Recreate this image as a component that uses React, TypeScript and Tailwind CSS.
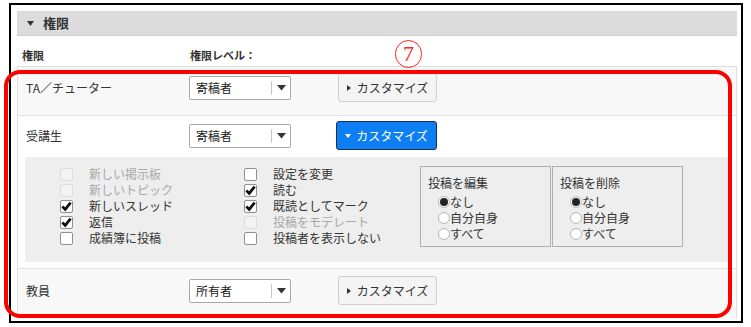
import React from "react";

const font = "font-['Noto_Sans_CJK_JP',sans-serif]";

type Item = { label: string; checked?: boolean; disabled?: boolean };

const col1: Item[] = [
  { label: "新しい掲示板", disabled: true },
  { label: "新しいトピック", disabled: true },
  { label: "新しいスレッド", checked: true },
  { label: "返信", checked: true },
  { label: "成績簿に投稿" },
];

const col2: Item[] = [
  { label: "設定を変更" },
  { label: "読む", checked: true },
  { label: "既読としてマーク", checked: true },
  { label: "投稿をモデレート", disabled: true },
  { label: "投稿者を表示しない" },
];

function Check({ item }: { item: Item }) {
  return (
    <div className="flex items-center h-[16px]">
      <span
        className={
          item.disabled
            ? "w-[13px] h-[13px] rounded-[2px] border border-[#dcdcdc] bg-[#f3f3f3] flex items-center justify-center"
            : "w-[13px] h-[13px] rounded-[2px] border border-[#8f8f8f] bg-white flex items-center justify-center"
        }
      >
        {item.checked && (
          <svg width="11" height="11" viewBox="0 0 11 11">
            <path d="M1.3 5.6 L4.2 8.4 L9.6 1.7" fill="none" stroke="#111" strokeWidth="2.8" />
          </svg>
        )}
      </span>
      <span className={item.disabled ? "ml-[16px] text-[#a8a8a8]" : "ml-[16px] text-[#333]"}>{item.label}</span>
    </div>
  );
}

function Radio({ label, on }: { label: string; on?: boolean }) {
  return (
    <div className="flex items-center h-[16px]">
      <span className="w-[12px] h-[12px] rounded-full border border-[#b5b5b5] bg-white flex items-center justify-center">
        {on && <span className="w-[8px] h-[8px] rounded-full bg-[#222]" />}
      </span>
      <span className="text-[#333]">{label}</span>
    </div>
  );
}

function Group({ title }: { title: string }) {
  return (
    <div className="w-[131px] h-[81px] border border-[#b0b0b0] pl-[7px] pt-[7px]">
      <div className="h-[18px] leading-[18px] text-[#333]">{title}</div>
      <div className="pl-[10px] pt-[2px]">
        <Radio label="なし" on />
        <Radio label="自分自身" />
        <Radio label="すべて" />
      </div>
    </div>
  );
}

function Select({ value }: { value: string }) {
  return (
    <div className="w-[102px] h-[24px] border border-[#a9a9a9] rounded-[2px] bg-white flex items-center">
      <span className="flex-1 pl-[6px] text-[#222] leading-[22px]">{value}</span>
      <span className="w-px h-[14px] bg-[#c8c8c8]" />
      <span className="w-[18px] flex justify-center">
        <svg width="9" height="6" viewBox="0 0 9 6">
          <path d="M0 0 H9 L4.5 5.5 Z" fill="#333" />
        </svg>
      </span>
    </div>
  );
}

function Custom({ active }: { active?: boolean }) {
  if (active) {
    return (
      <div className="w-[101px] h-[29px] rounded-[3px] border border-[#1c2f4d] bg-[#0d7ff3] flex items-center justify-center text-white">
        <svg width="6" height="4" viewBox="0 0 6 4" className="mr-[5px]">
          <path d="M0 0 H6 L3 4 Z" fill="#fff" />
        </svg>
        カスタマイズ
      </div>
    );
  }
  return (
    <div className="w-[99px] h-[29px] rounded-[3px] border border-[#d0d0d0] bg-[#f4f4f4] flex items-center justify-center text-[#333]">
      <svg width="4" height="6" viewBox="0 0 4 6" className="mr-[6px]">
        <path d="M0 0 L4 3 L0 6 Z" fill="#333" />
      </svg>
      カスタマイズ
    </div>
  );
}

function RowHead({ label, value, active }: { label: string; value: string; active?: boolean }) {
  return (
    <div className="flex items-center h-[29px]">
      <span className="w-[171px] pl-[8px] text-[#333]">{label}</span>
      <Select value={value} />
      <span className={active ? "ml-[45px]" : "ml-[47px]"}>
        <Custom active={active} />
      </span>
    </div>
  );
}

export default function App() {
  return (
    <div className={`relative w-[751px] h-[327px] bg-white text-[12px] ${font}`}>
      <div className="absolute left-[9px] top-[3px] w-[734px] h-[320px] border-2 border-black" />
      <div className="pl-[17px] pt-[11px] w-[737px]">
        <div className="h-[25px] bg-[#dcdcdc] border-b border-[#cfcfcf] flex items-center pl-[10px]">
          <svg width="7" height="5" viewBox="0 0 7 5">
            <path d="M0 0 H7 L3.5 5 Z" fill="#333" />
          </svg>
          <span className="ml-[9px] text-[13px] font-bold text-[#333] leading-[20px]">権限</span>
        </div>
        <div className="h-[31px] flex items-end pb-[3px] border-b border-[#dedede] text-[11px] font-bold text-[#333]">
          <span className="w-[173px] pl-[5px]">権限</span>
          <span>権限レベル：</span>
        </div>
        <div className="border-x border-[#dedede] h-[252px]">
          <div className="h-[49px] bg-[#f8f8f8] pt-[6px] border-b border-[#e2e2e2]">
            <RowHead label="TA／チューター" value="寄稿者" />
          </div>
          <div className="bg-white pt-[5px] border-b border-[#e2e2e2] pb-[6px]">
            <RowHead label="受講生" value="寄稿者" active />
            <div className="mt-[7px] ml-[7px] w-[704px] h-[105px] bg-[#eeeeee] flex pl-[35px] pt-[9px] leading-[16px]">
              <div className="w-[184px]">
                {col1.map((i) => (
                  <Check key={i.label} item={i} />
                ))}
              </div>
              <div className="w-[176px]">
                {col2.map((i) => (
                  <Check key={i.label} item={i} />
                ))}
              </div>
              <div className="flex gap-[1px]">
                <Group title="投稿を編集" />
                <Group title="投稿を削除" />
              </div>
            </div>
          </div>
          <div className="h-[50px] bg-[#f8f8f8] pt-[7px]">
            <RowHead label="教員" value="所有者" />
          </div>
        </div>
      </div>
      <div className="absolute left-[4px] top-[70px] w-[728px] h-[248px] border-[4px] border-[#ff0000] rounded-[16px]" />
      <div className="absolute left-[395px] top-[40px] w-[27px] h-[28px] rounded-full border border-[#ff2020] flex items-center justify-center text-[#ff2020] text-[22px] leading-none font-['Liberation_Serif',serif]">
        7
      </div>
    </div>
  );
}
